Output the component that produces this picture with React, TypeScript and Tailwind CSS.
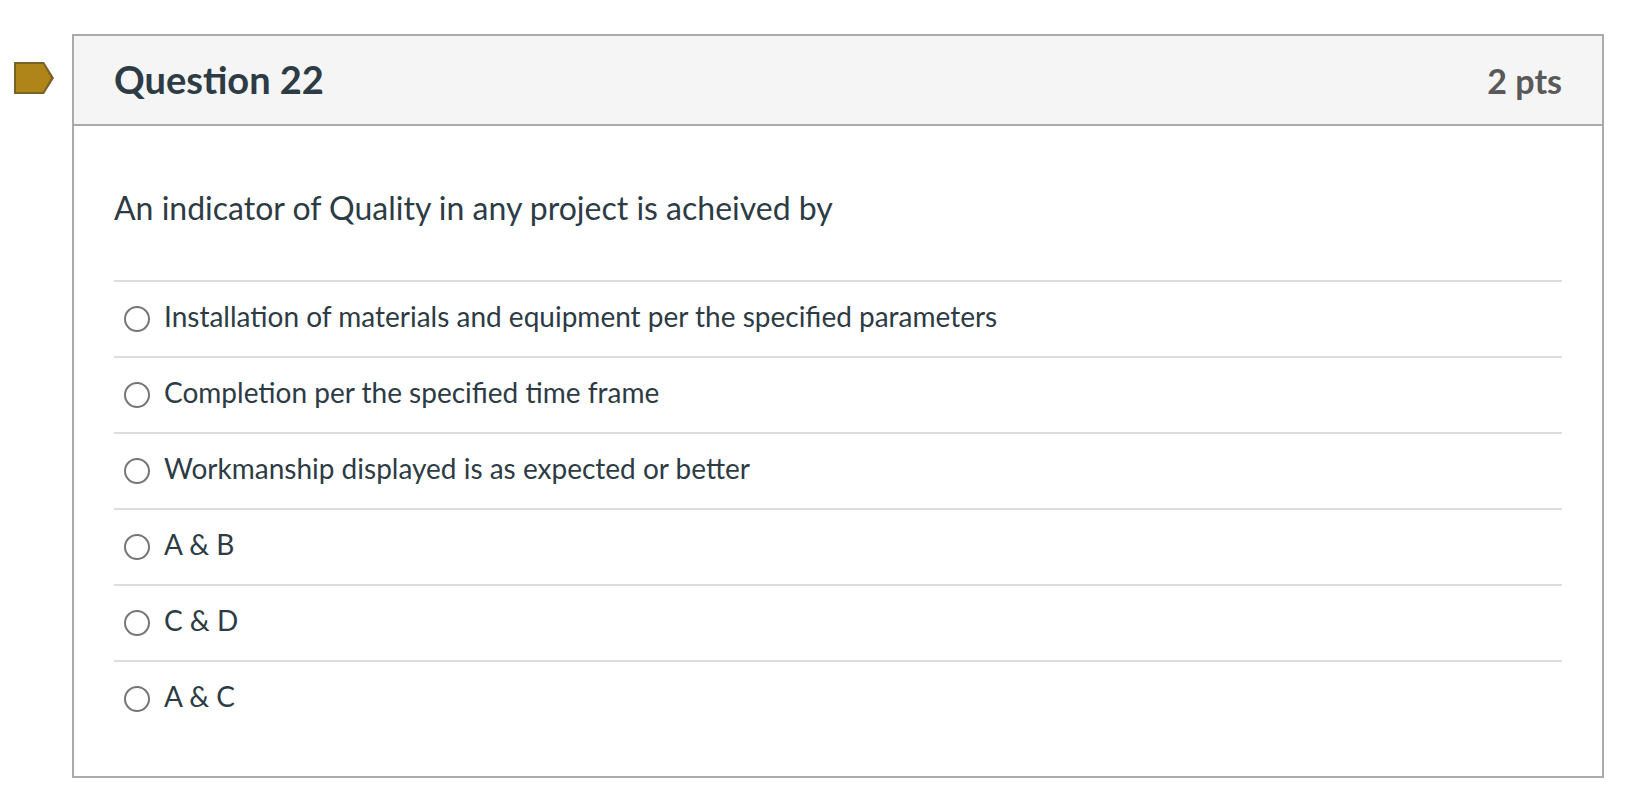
const answers = [
  'Installation of materials and equipment per the specified parameters',
  'Completion per the specified time frame',
  'Workmanship displayed is as expected or better',
  'A & B',
  'C & D',
  'A & C',
];

function FlagMarker() {
  return (
    <button type="button" aria-label="Flag question" className="mt-7 h-8 w-10 shrink-0">
      <svg viewBox="0 0 40 32" className="h-8 w-10" aria-hidden>
        <path d="M0 0H30L40 16L30 32H0Z" fill="#7a6226" />
        <path d="M2 2H29L37 16L29 30H2Z" fill="#af8419" />
      </svg>
    </button>
  );
}

function AnswerRow({ text }: { text: string }) {
  return (
    <label className="flex min-h-[76px] items-start border-t-2 border-[#dddddd] pt-[18px] pl-2.5">
      <input
        type="radio"
        name="answer"
        className="mt-1.5 mr-3.5 size-[26px] shrink-0 appearance-none rounded-full border-2 border-[#767676] bg-white checked:bg-[#767676]"
      />
      <span className="text-[28px] leading-8">{text}</span>
    </label>
  );
}

export default function App() {
  return (
    <main className="flex items-start bg-white pt-[34px] pr-[46px] pb-8 pl-3.5 font-[Lato,sans-serif] text-[#2d3b45]">
      <FlagMarker />
      <section className="ml-[18px] min-w-0 flex-1 border-2 border-[#aaaaaa]">
        <header className="flex items-baseline justify-between border-b-2 border-[#aaaaaa] bg-[#f5f5f5] px-10 pt-[19px] pb-[21px]">
          <h1 className="text-[38px] leading-[48px] font-bold">Question 22</h1>
          <span className="text-[34px] leading-10 font-bold text-[#595959]">2 pts</span>
        </header>
        <div className="px-10 pt-[58px] pb-10">
          <p className="mb-12 text-[32px] leading-[48px]">
            An indicator of Quality in any project is acheived by
          </p>
          <fieldset aria-label="Answers">
            {answers.map((text) => (
              <AnswerRow key={text} text={text} />
            ))}
          </fieldset>
        </div>
      </section>
    </main>
  );
}
